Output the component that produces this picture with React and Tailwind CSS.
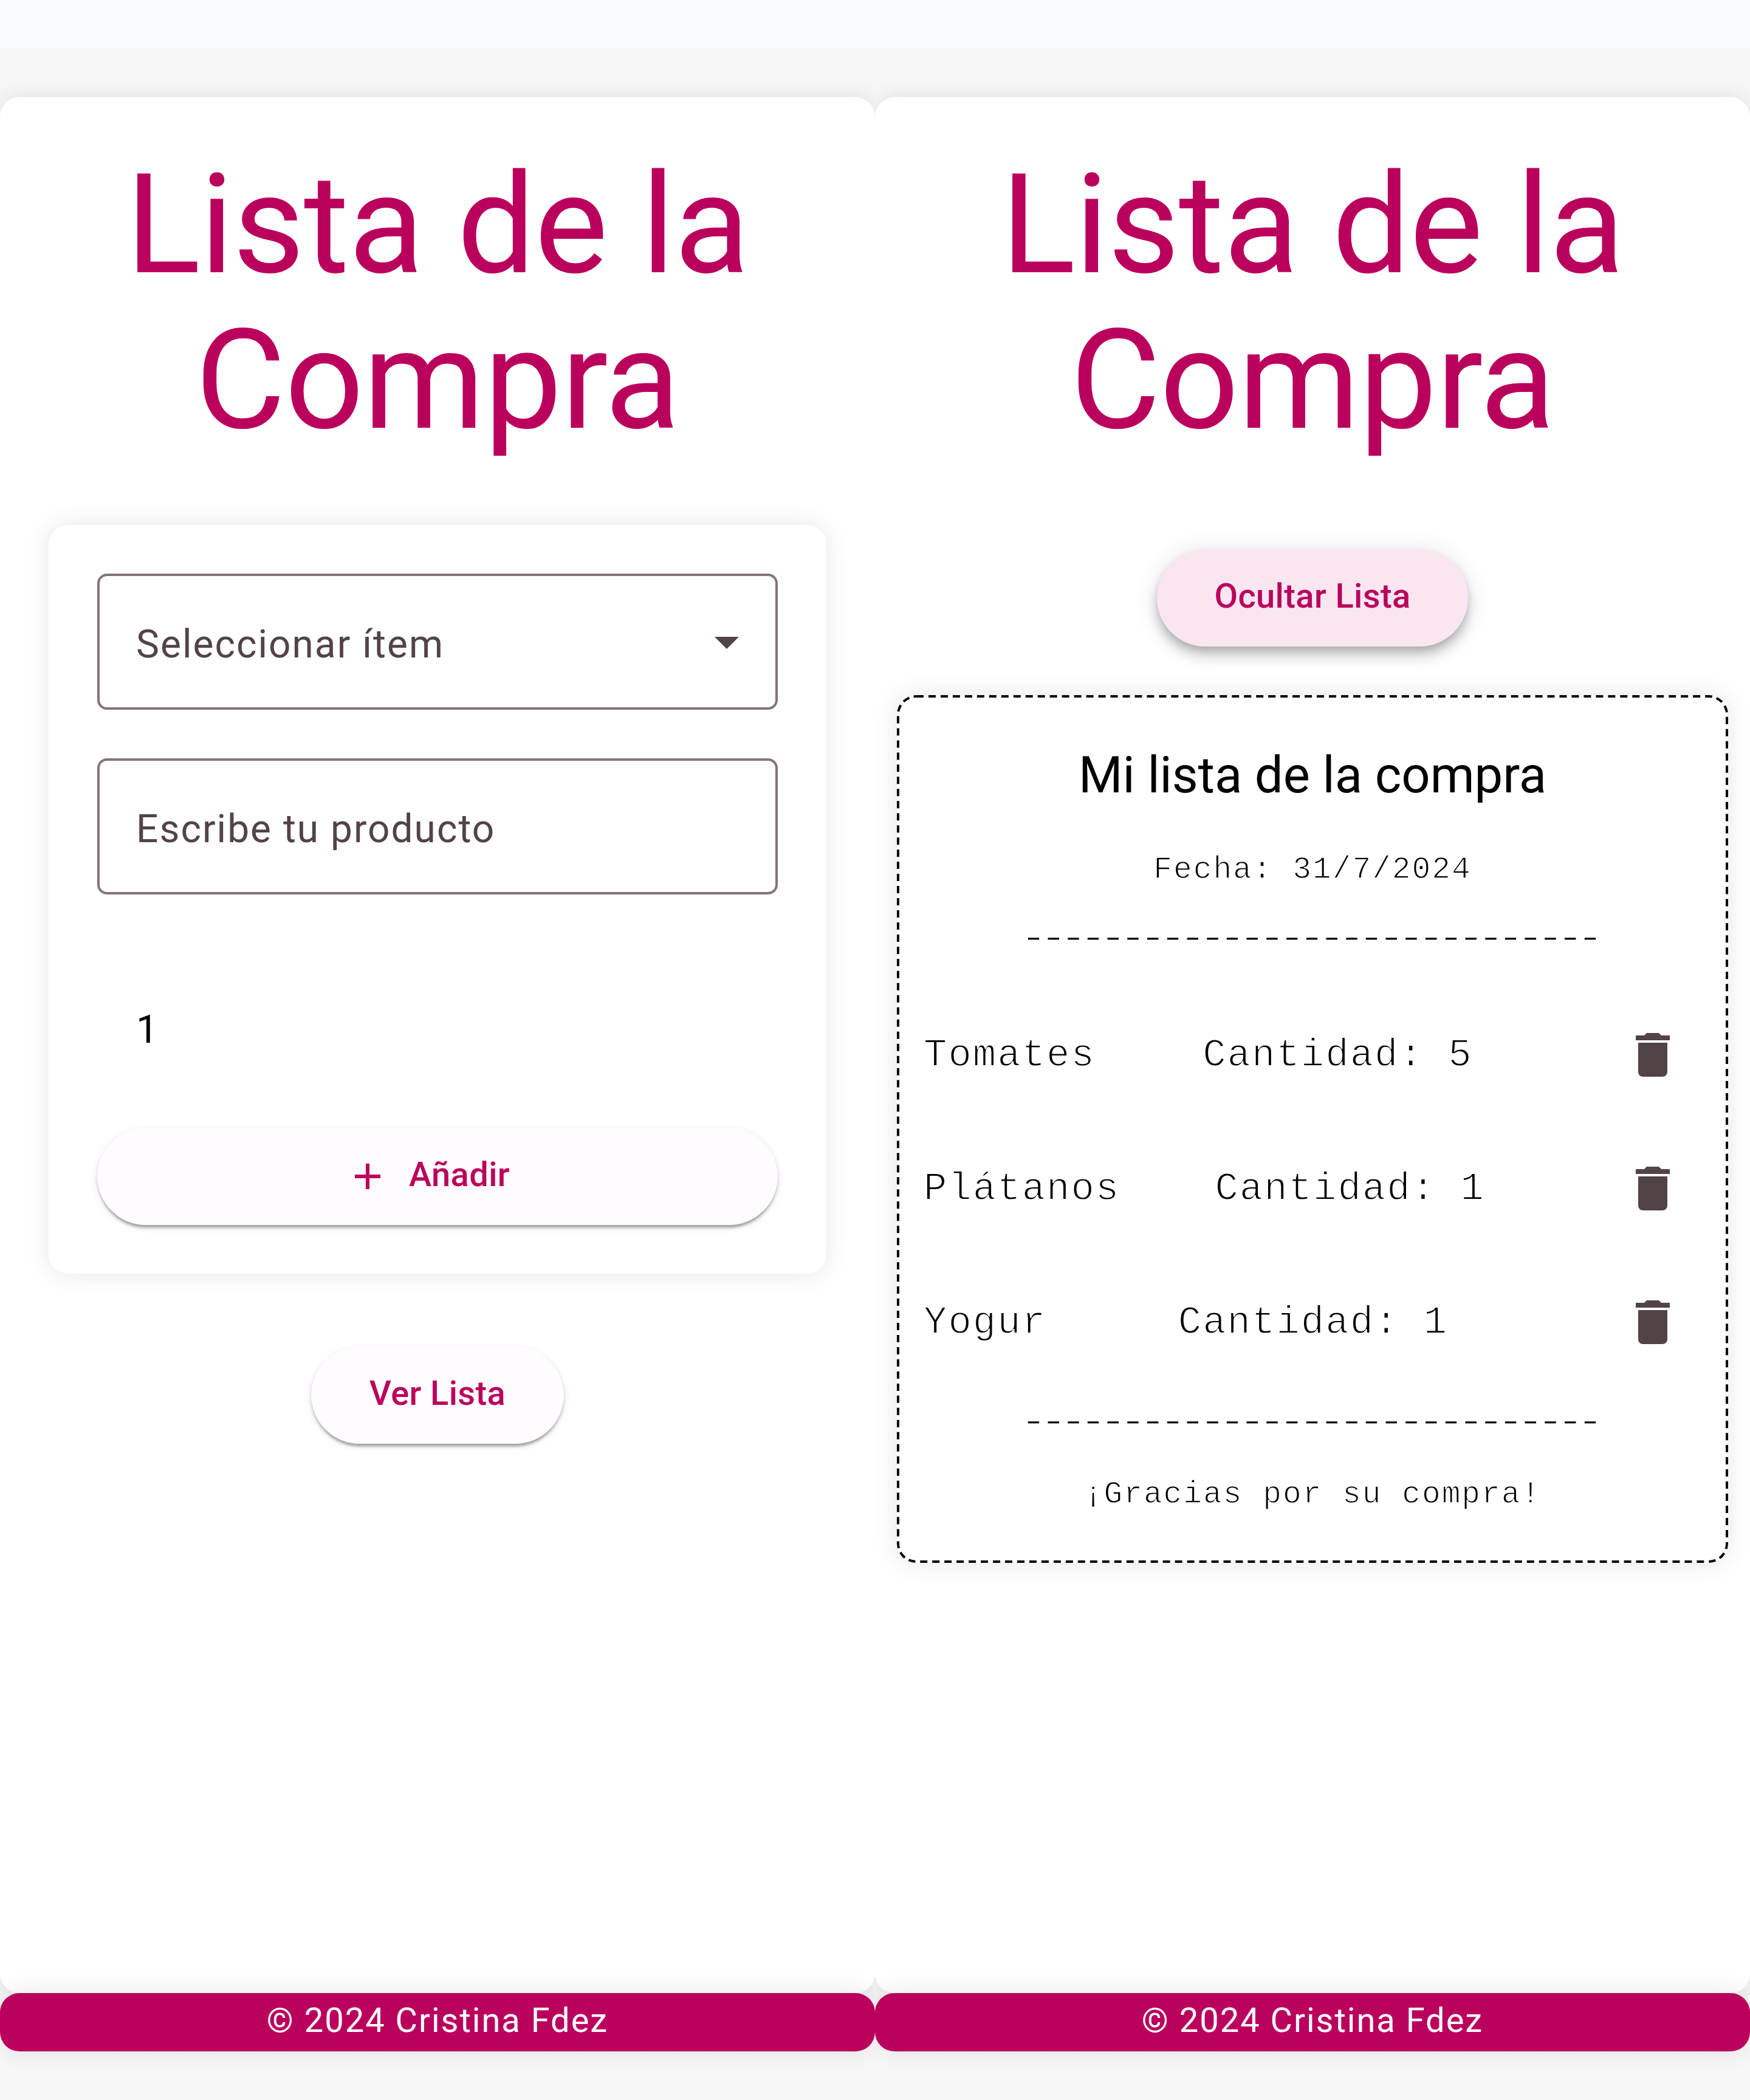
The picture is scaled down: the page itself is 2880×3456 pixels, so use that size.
const FECHA = '31/7/2024';
const RULE = '-----------------------------';

const items = [
  { name: 'Tomates', quantity: 5 },
  { name: 'Plátanos', quantity: 1 },
  { name: 'Yogur', quantity: 1 },
];

function TrashIcon() {
  return (
    <svg viewBox="0 0 24 24" className="size-24 fill-[#524346]">
      <path d="M6 19c0 1.1.9 2 2 2h8c1.1 0 2-.9 2-2V7H6v12zM19 4h-3.5l-1-1h-5l-1 1H5v2h14V4z" />
    </svg>
  );
}

function Rule({ className }) {
  return (
    <p className={className}>
      <span className="mr-3 inline-block scale-x-140 tracking-[-7.35px] whitespace-nowrap [-webkit-text-stroke:0.8px_white]">
        {RULE}
      </span>
    </p>
  );
}

function Screen({ children }) {
  return (
    <div className="flex h-[3456px] w-[1440px] flex-col overflow-hidden pt-40">
      <main className="flex h-[3120px] flex-col items-center rounded-[32px] bg-white pt-[82px] shadow-[0_0_40px_rgba(0,0,0,0.1)]">
        <h1 className="-mb-0.5 w-[1280px] text-center text-[228px] leading-[256px] tracking-[-1px] text-[#ba005c]">
          Lista de la
          <br />
          Compra
        </h1>
        {children}
      </main>
      <footer className="h-24 rounded-[32px] bg-[#ba005c] pb-1 text-center text-[56px] leading-[90px] tracking-[2px] text-white shadow-[0_0_40px_rgba(0,0,0,0.1)]">
        © 2024 Cristina Fdez
      </footer>
    </div>
  );
}

function FormScreen() {
  return (
    <Screen>
      <form className="mt-28 flex h-[1232px] w-[1280px] flex-col rounded-[32px] bg-white p-20 shadow-[0_0_40px_rgba(0,0,0,0.1)]">
        <div className="flex h-56 items-center justify-between rounded-2xl border-4 border-[#847377] px-15 pt-2.5 text-[64px] leading-[96px] tracking-[2px] text-[#524346]">
          <span>Seleccionar ítem</span>
          <svg viewBox="0 0 10 5" className="-mt-1.5 h-5 w-10 fill-[#524346]">
            <path d="M0 0h10L5 5z" />
          </svg>
        </div>
        <div className="mt-20 flex h-56 items-center rounded-2xl border-4 border-[#847377] px-15 pt-2.5 text-[64px] leading-[96px] tracking-[2px] text-[#524346]">
          Escribe tu producto
        </div>
        <div className="mt-[175px] pl-16 text-[64px] leading-[96px] tracking-[2px] text-black">1</div>
        <button
          type="button"
          className="mt-[113px] flex h-40 items-center justify-center rounded-full bg-[#fffbff] text-[56px] leading-[80px] font-medium tracking-[0.4px] text-[#ba005c] shadow-[0_8px_4px_-4px_rgba(0,0,0,0.2),0_4px_4px_0_rgba(0,0,0,0.14),0_4px_12px_0_rgba(0,0,0,0.12)]"
        >
          <svg viewBox="0 0 24 24" className="mr-8 -ml-8 size-18 fill-current">
            <path d="M19 13h-6v6h-2v-6H5v-2h6V5h2v6h6v2z" />
          </svg>
          <span className="pb-1.5">Añadir</span>
        </button>
      </form>
      <button
        type="button"
        className="mt-30 flex h-40 w-[416px] items-center justify-center rounded-full bg-[#fffbff] pb-1.5 text-[56px] leading-[80px] font-medium tracking-[0.4px] text-[#ba005c] shadow-[0_8px_4px_-4px_rgba(0,0,0,0.2),0_4px_4px_0_rgba(0,0,0,0.14),0_4px_12px_0_rgba(0,0,0,0.12)]"
      >
        Ver Lista
      </button>
    </Screen>
  );
}

function ListScreen() {
  return (
    <Screen>
      <button
        type="button"
        className="mt-38 flex h-40 w-[512px] items-center justify-center rounded-full bg-[#fae6f1] pb-1.5 text-[56px] leading-[80px] font-medium tracking-[0.4px] text-[#ba005c] shadow-[0_8px_16px_-4px_rgba(0,0,0,0.2),0_16px_20px_0_rgba(0,0,0,0.14),0_4px_40px_0_rgba(0,0,0,0.12)]"
      >
        Ocultar Lista
      </button>
      <section className="relative mt-20 flex h-[1428px] w-[1368px] flex-col rounded-[32px] bg-white px-11 pt-20 text-center font-['Liberation_Mono',monospace] text-[51.2px] leading-[80px] tracking-[2px] text-black shadow-[0_0_40px_rgba(0,0,0,0.1)]">
        {/* Dashed ticket outline, enlarged so the dashes keep thin-border proportions */}
        <div className="pointer-events-none absolute top-0 left-0 h-[357px] w-[342px] origin-top-left scale-400 rounded-lg border border-dashed border-black" />
        <h2 className="font-['Roboto',sans-serif] text-[83.2px] leading-[104px] tracking-normal">
          Mi lista de la compra
        </h2>
        <p className="mt-[63px] [-webkit-text-stroke:1.4px_white]">Fecha: {FECHA}</p>
        <Rule className="mt-[34px]" />
        <ul className="mt-[41px]">
          {items.map((item) => (
            <li
              key={item.name}
              className="flex h-[220px] items-center justify-between text-[64px] leading-[96px] [-webkit-text-stroke:1.8px_white]"
            >
              <span className="pt-0.5">{item.name}</span>
              <span className="pt-0.5 pr-10">Cantidad: {item.quantity}</span>
              <span className="flex size-40 items-center justify-center">
                <TrashIcon />
              </span>
            </li>
          ))}
        </ul>
        <Rule className="mt-[15px]" />
        <p className="mt-[38px] [-webkit-text-stroke:1.4px_white]">¡Gracias por su compra!</p>
      </section>
    </Screen>
  );
}

export default function App() {
  return (
    <div className="flex w-[2880px] bg-linear-to-b from-[#f8fafc] from-[80px] to-[#f7f7f7] to-[80px] font-['Roboto',sans-serif]">
      <FormScreen />
      <ListScreen />
    </div>
  );
}
